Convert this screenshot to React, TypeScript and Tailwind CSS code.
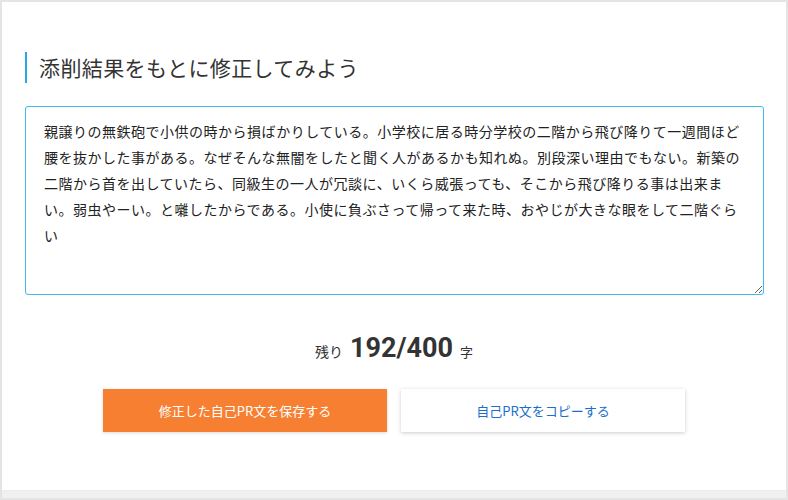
import { useState } from 'react'

const JP = "font-['Noto_Sans_CJK_JP','Noto_Sans',sans-serif]"

const initialText =
  '親譲りの無鉄砲で小供の時から損ばかりしている。小学校に居る時分学校の二階から飛び降りて一週間ほど腰を抜かした事がある。なぜそんな無闇をしたと聞く人があるかも知れぬ。別段深い理由でもない。新築の二階から首を出していたら、同級生の一人が冗談に、いくら威張っても、そこから飛び降りる事は出来まい。弱虫やーい。と囃したからである。小使に負ぶさって帰って来た時、おやじが大きな眼をして二階ぐらい'

const MAX = 400

export default function App() {
  const [text, setText] = useState(initialText)

  return (
    <div className={`w-[788px] h-[500px] bg-[#e4e4e4] pt-[2px] px-[2px] pb-[2px] flex flex-col ${JP}`}>
      <div className="flex-1 bg-white flex flex-col pt-[50px] px-[23px]">
        {/* Heading */}
        <h2 className="border-l-[2px] border-[#29a8e6] pl-[12px] h-[31px] flex items-center text-[21px] tracking-[0.4px] text-[#333] font-normal">
          添削結果をもとに修正してみよう
        </h2>

        {/* Editor */}
        <textarea
          value={text}
          onChange={e => setText(e.target.value)}
          className="mt-[23px] w-[739px] h-[189px] border border-[#3cbaf0] rounded-[3px] pt-[11px] px-[18px] text-[14px] leading-[26px] tracking-[0.5px] text-[#222] outline-none resize-y"
          style={{ lineBreak: 'strict' }}
        />

        {/* Counter */}
        <div className="mt-[40px] flex items-baseline justify-center text-[#333]">
          <span className="text-[14px]">残り</span>
          <span className="mx-[7px] text-[27px] font-bold font-['Roboto',sans-serif] leading-none">
            {text.length}/{MAX}
          </span>
          <span className="text-[13px]">字</span>
        </div>

        {/* Actions */}
        <div className="mt-[27px] flex justify-center gap-[14px]">
          <button className="w-[284px] h-[43px] bg-[#f77f31] text-white text-[13px] shadow-[0_1px_3px_rgba(0,0,0,0.15)]">
            修正した自己PR文を保存する
          </button>
          <button className="w-[284px] h-[43px] bg-white text-[#1b6fcb] text-[13px] shadow-[0_1px_4px_rgba(0,0,0,0.2)]">
            自己PR文をコピーする
          </button>
        </div>
      </div>
      <div className="h-[8px] bg-[#f0f0f0] border-t border-[#ececec]" />
    </div>
  )
}
